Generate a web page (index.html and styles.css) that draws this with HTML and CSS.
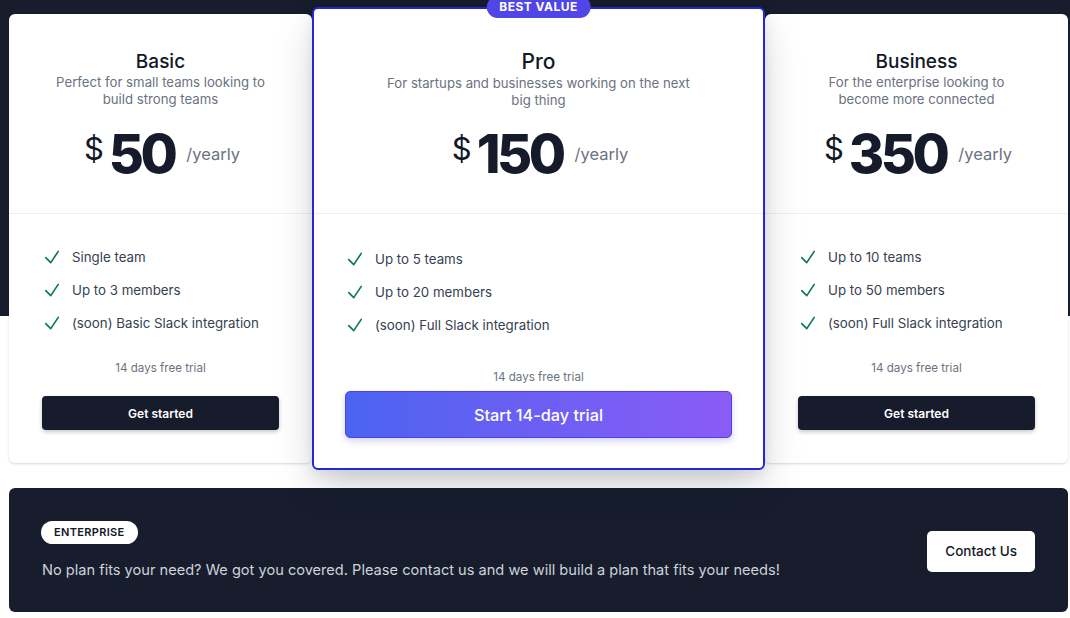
FILE: index.html
```html
<!DOCTYPE html>
<html lang="en">
<head>
<meta charset="utf-8">
<title>Pricing</title>
<link rel="stylesheet" href="styles.css">
</head>
<body>
<div class="page">
  <div class="plans">
    <div class="card card-side">
      <div class="card-head">
        <h3 class="plan-name">Basic</h3>
        <p class="plan-desc">Perfect for small teams looking to build strong teams</p>
        <div class="price"><span class="cur">$</span><span class="amount">50</span><span class="per">/yearly</span></div>
      </div>
      <div class="card-body">
        <ul class="features">
          <li><svg class="check" viewBox="0 0 24 24"><path d="M4.5 12.75l6 6 9-13.5"/></svg>Single team</li>
          <li><svg class="check" viewBox="0 0 24 24"><path d="M4.5 12.75l6 6 9-13.5"/></svg>Up to 3 members</li>
          <li><svg class="check" viewBox="0 0 24 24"><path d="M4.5 12.75l6 6 9-13.5"/></svg>(soon) Basic Slack integration</li>
        </ul>
        <p class="trial">14 days free trial</p>
        <button class="btn-dark">Get started</button>
      </div>
    </div>

    <div class="card card-pro">
      <span class="badge">BEST VALUE</span>
      <div class="card-head">
        <h3 class="plan-name">Pro</h3>
        <p class="plan-desc">For startups and businesses working on the next big thing</p>
        <div class="price"><span class="cur">$</span><span class="amount">150</span><span class="per">/yearly</span></div>
      </div>
      <div class="card-body">
        <ul class="features">
          <li><svg class="check" viewBox="0 0 24 24"><path d="M4.5 12.75l6 6 9-13.5"/></svg>Up to 5 teams</li>
          <li><svg class="check" viewBox="0 0 24 24"><path d="M4.5 12.75l6 6 9-13.5"/></svg>Up to 20 members</li>
          <li><svg class="check" viewBox="0 0 24 24"><path d="M4.5 12.75l6 6 9-13.5"/></svg>(soon) Full Slack integration</li>
        </ul>
        <p class="trial">14 days free trial</p>
        <button class="btn-grad">Start 14-day trial</button>
      </div>
    </div>

    <div class="card card-side">
      <div class="card-head">
        <h3 class="plan-name">Business</h3>
        <p class="plan-desc">For the enterprise looking to become more connected</p>
        <div class="price"><span class="cur">$</span><span class="amount">350</span><span class="per">/yearly</span></div>
      </div>
      <div class="card-body">
        <ul class="features">
          <li><svg class="check" viewBox="0 0 24 24"><path d="M4.5 12.75l6 6 9-13.5"/></svg>Up to 10 teams</li>
          <li><svg class="check" viewBox="0 0 24 24"><path d="M4.5 12.75l6 6 9-13.5"/></svg>Up to 50 members</li>
          <li><svg class="check" viewBox="0 0 24 24"><path d="M4.5 12.75l6 6 9-13.5"/></svg>(soon) Full Slack integration</li>
        </ul>
        <p class="trial">14 days free trial</p>
        <button class="btn-dark">Get started</button>
      </div>
    </div>
  </div>

  <div class="enterprise">
    <div class="ent-info">
      <span class="ent-pill">ENTERPRISE</span>
      <p class="ent-text">No plan fits your need? We got you covered. Please contact us and we will build a plan that fits your needs!</p>
    </div>
    <button class="btn-contact">Contact Us</button>
  </div>
</div>
</body>
</html>
```

FILE: styles.css
```css
* { box-sizing: border-box; }

html, body {
  margin: 0;
  padding: 0;
}

body {
  font-family: Inter, "Noto Sans", "Liberation Sans", sans-serif;
  background: linear-gradient(to bottom, #171d2d 0, #171d2d 316px, #ffffff 316px);
  min-height: 618px;
  color: #111827;
}

.page {
  padding: 7px 2px 0 9px;
}

.plans {
  display: flex;
  align-items: center;
}

.card {
  background: #fff;
  border-radius: 6px;
  display: flex;
  flex-direction: column;
}

.card-side {
  width: 303px;
  height: 449px;
  box-shadow: 0 1px 3px rgba(0, 0, 0, 0.1), 0 1px 2px rgba(0, 0, 0, 0.06);
}

.card-pro {
  width: 453px;
  height: 463px;
  border: 2px solid #2626d4;
  position: relative;
  z-index: 1;
  box-shadow: 0 18px 40px -6px rgba(15, 23, 42, 0.22), 0 6px 14px rgba(15, 23, 42, 0.08);
}

.badge {
  position: absolute;
  top: -13px;
  left: 50%;
  transform: translateX(-50%);
  height: 22px;
  line-height: 22px;
  padding: 0 13px;
  border-radius: 11px;
  background: #4f46e5;
  color: #fff;
  font-size: 12px;
  font-weight: 700;
  letter-spacing: 0.04em;
  white-space: nowrap;
}

.card-head {
  text-align: center;
  border-bottom: 1px solid #eeeff1;
  padding: 36px 0 32px;
}

.card-pro .card-head {
  padding: 40px 0 32px;
}

.plan-name {
  margin: 0;
  font-size: 19px;
  line-height: 24px;
  font-weight: 500;
  color: #111827;
}

.card-pro .plan-name {
  font-size: 21px;
  line-height: 26px;
  margin-bottom: -1px;
}

.plan-desc {
  margin: 0 auto;
  max-width: 71%;
  font-size: 13.2px;
  line-height: 17px;
  color: #6b7280;
}

.card-pro .plan-desc {
  margin-top: 1px;
}

.price {
  display: flex;
  justify-content: center;
  align-items: flex-start;
  margin-top: 19px;
  height: 54px;
  padding-left: 3px;
}

.card-pro .price {
  margin-top: 18px;
}

.cur {
  font-size: 31px;
  line-height: 31px;
  margin-top: 6px;
  margin-right: 5px;
  color: #111827;
}

.amount {
  font-size: 54px;
  line-height: 54px;
  font-weight: 800;
  letter-spacing: -0.065em;
  color: #161b2b;
}

.per {
  font-size: 16.5px;
  line-height: 18px;
  margin-top: 18px;
  margin-left: 12px;
  color: #6b7280;
}

.card-body {
  padding: 33px 33px 33px;
  display: flex;
  flex-direction: column;
}

.card-pro .card-body {
  padding: 35px 31px 30px;
}

.features {
  list-style: none;
  margin: 0;
  padding: 0;
  display: flex;
  flex-direction: column;
  gap: 13px;
}

.features li {
  display: flex;
  align-items: center;
  gap: 10px;
  font-size: 13.3px;
  line-height: 20px;
  color: #374151;
}

.check {
  width: 20px;
  height: 20px;
  flex: none;
  fill: none;
  stroke: #0b7a50;
  stroke-width: 2;
  stroke-linecap: round;
  stroke-linejoin: round;
}

.trial {
  margin: 27px 0 0;
  text-align: center;
  font-size: 11.6px;
  line-height: 16px;
  color: #6b7280;
}

.card-pro .trial {
  margin-top: 34px;
}

.btn-dark {
  margin-top: 20px;
  height: 34px;
  border: none;
  border-radius: 4px;
  background: #161c2c;
  color: #fff;
  font-family: inherit;
  font-size: 12px;
  font-weight: 600;
  box-shadow: 0 2px 4px rgba(0, 0, 0, 0.22);
}

.btn-grad {
  margin-top: 6px;
  height: 47px;
  border: 1px solid #4a46d8;
  border-radius: 5px;
  background: linear-gradient(to right, #4a64f0, #6a5ff3 45%, #8a5cf6);
  color: #fff;
  font-family: inherit;
  font-size: 16.3px;
  font-weight: 500;
  box-shadow: 0 3px 6px rgba(79, 70, 229, 0.25);
}

.enterprise {
  margin-top: 18px;
  height: 124px;
  background: #171d2d;
  border-radius: 6px;
  padding: 2px 33px 0 33px;
  display: flex;
  align-items: center;
  justify-content: space-between;
}

.ent-info {
  display: flex;
  flex-direction: column;
  align-items: flex-start;
}

.ent-pill {
  display: inline-block;
  height: 23px;
  line-height: 23px;
  padding: 0 13px;
  margin-left: -1px;
  border-radius: 12px;
  background: #fff;
  color: #111827;
  font-size: 11px;
  font-weight: 600;
  letter-spacing: 0.03em;
}

.ent-text {
  margin: 14px 0 0;
  font-size: 14.6px;
  line-height: 24px;
  color: #ced2da;
}

.btn-contact {
  height: 41px;
  padding: 0 18px;
  border: none;
  border-radius: 5px;
  background: #fff;
  color: #111827;
  font-family: inherit;
  font-size: 13.5px;
  font-weight: 500;
}
```
